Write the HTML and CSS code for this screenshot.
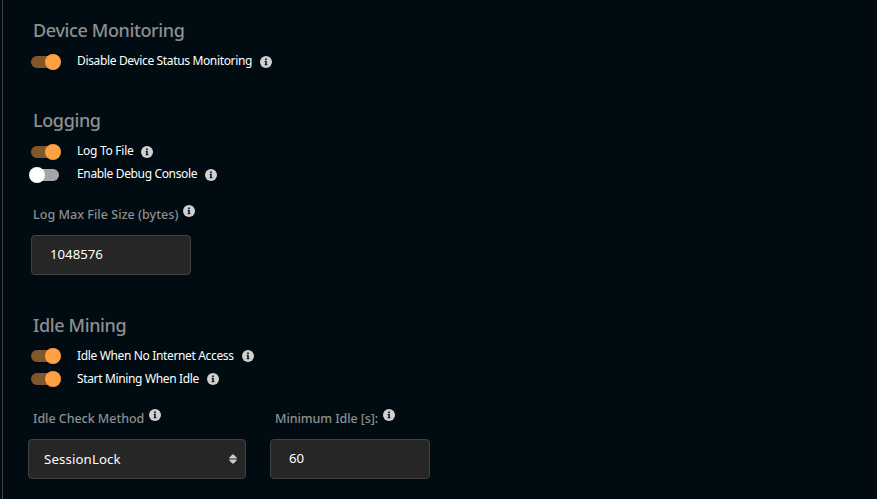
FILE: index.html
```html
<!DOCTYPE html>
<html lang="en">
<head>
<meta charset="utf-8">
<title>Settings</title>
<link rel="stylesheet" href="styles.css">
</head>
<body>
<svg width="0" height="0" class="defs" aria-hidden="true">
  <symbol id="info" viewBox="0 0 12 12">
    <circle cx="6" cy="6" r="6" fill="#d0d0d0"/>
    <path d="M5.1 2.6h1.8v1.6H5.1zM4.6 5.1h2.2v3.1h.6v1H4.6v-1h.6V6.1h-.6z" fill="#10181c"/>
  </symbol>
</svg>
<main class="panel">
  <section class="group monitoring">
    <h2>Device Monitoring</h2>
    <div class="row"><i class="switch on"></i><span class="name">Disable Device Status Monitoring</span><svg class="info"><use href="#info"/></svg></div>
  </section>
  <section class="group logging">
    <h2>Logging</h2>
    <div class="row"><i class="switch on"></i><span class="name loose">Log To File</span><svg class="info"><use href="#info"/></svg></div>
    <div class="row"><i class="switch"></i><span class="name">Enable Debug Console</span><svg class="info"><use href="#info"/></svg></div>
    <div class="fields">
      <div class="field">
        <div class="label size-label"><span>Log Max File Size (bytes)</span><svg class="info"><use href="#info"/></svg></div>
        <div class="box">1048576</div>
      </div>
    </div>
  </section>
  <section class="group idle">
    <h2>Idle Mining</h2>
    <div class="row"><i class="switch on"></i><span class="name">Idle When No Internet Access</span><svg class="info"><use href="#info"/></svg></div>
    <div class="row"><i class="switch on"></i><span class="name">Start Mining When Idle</span><svg class="info"><use href="#info"/></svg></div>
    <div class="fields">
      <div class="field method">
        <div class="label"><span>Idle Check Method</span><svg class="info"><use href="#info"/></svg></div>
        <div class="box select"><span>SessionLock</span><svg class="arrows" viewBox="0 0 8 10"><path d="M.3 4.4V3.6L3.4.4h1.2l3.1 3.2v.8zM.3 5.6h7.4v.8L4.6 9.6H3.4L.3 6.4z" fill="#ccc"/></svg></div>
      </div>
      <div class="field minimum">
        <div class="label"><span>Minimum Idle [s]:</span><svg class="info"><use href="#info"/></svg></div>
        <div class="box">60</div>
      </div>
    </div>
  </section>
</main>
</body>
</html>
```
FILE: styles.css
```css
* { box-sizing: border-box; }
body {
  margin: 0;
  height: 499px;
  overflow: hidden;
  background: #000c12;
  font-family: "Noto Sans", "Open Sans", sans-serif;
  color: #fff;
}
.defs { display: block; }
.panel {
  margin-left: 2px;
  height: 499px;
  border-left: 1px solid #444;
  padding-left: 28px;
}
.group { display: flow-root; }
.monitoring { height: 90px; }
.logging { height: 204px; }
h2 {
  margin: 0 0 0 2px;
  height: 50px;
  padding-top: 17px;
  font-size: 18px;
  line-height: 26px;
  font-weight: 500;
  letter-spacing: -0.37px;
  color: #8d8f90;
  white-space: nowrap;
}
.idle h2 { padding-top: 18px; }
.row { display: flex; align-items: center; height: 23px; }
.info { display: block; width: 12px; height: 12px; flex: none; }
.switch {
  position: relative;
  width: 28px;
  height: 12px;
  border-radius: 6px;
  background: #a6a6a8;
  margin-right: 18px;
  flex: none;
}
.switch::after {
  content: "";
  position: absolute;
  top: -2px;
  left: -2px;
  width: 16px;
  height: 16px;
  border-radius: 50%;
  background: #fff;
}
.switch.on { background: #80572b; }
.switch.on::after { left: 14px; background: #ffa142; }
.name {
  font-size: 12px;
  line-height: 18px;
  letter-spacing: -0.35px;
  margin-right: 8px;
  padding-bottom: 2px;
  white-space: nowrap;
}
.idle .name { padding-bottom: 0; }
.loose { letter-spacing: -0.27px; }
.fields { display: flex; margin-top: 19px; }
.field { width: 160px; }
.method { width: 218px; margin: 0 24px 0 -3px; }
.label {
  display: flex;
  height: 30px;
  margin-left: 2px;
  font-size: 12.5px;
  line-height: 20px;
  font-weight: 500;
  color: #8d8f90;
  white-space: nowrap;
}
.size-label { letter-spacing: 0.04px; }
.method .label { margin-left: 5px; letter-spacing: -0.04px; }
.minimum .label { margin-left: 5px; letter-spacing: -0.08px; }
.label span { margin-right: 5px; }
.box {
  height: 40px;
  border: 1px solid #424242;
  border-radius: 4px;
  background: #262626;
  padding: 0 18px;
  font-size: 13.2px;
  line-height: 37px;
}
.select {
  display: flex;
  align-items: center;
  justify-content: space-between;
  padding: 0 8px 0 15px;
  line-height: 38px;
  letter-spacing: 0.15px;
}
.arrows { width: 8px; height: 10px; }
```
